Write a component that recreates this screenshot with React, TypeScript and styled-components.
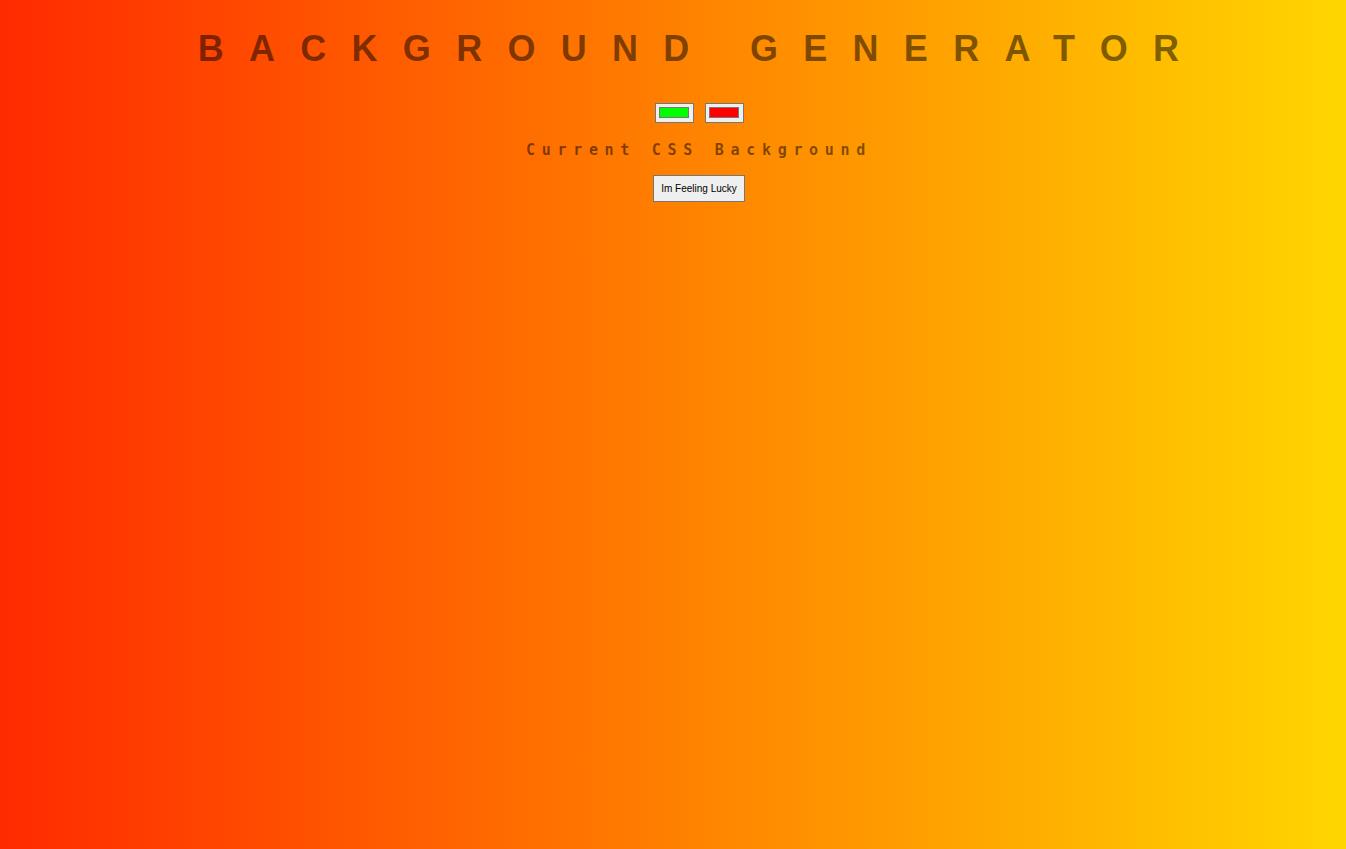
import React, { useState } from "react";
import styled, { createGlobalStyle } from "styled-components";

const Global = createGlobalStyle`
  html, body {
    margin: 0;
    padding: 0;
    min-height: 100%;
  }
  body {
    min-height: 849px;
    background: linear-gradient(to right, #ff2a00, #ffd600);
    font-family: "Liberation Sans", Arial, sans-serif;
    color: rgba(0, 0, 0, 0.5);
  }
`;

const Page = styled.main`
  display: flex;
  flex-direction: column;
  align-items: center;
  padding: 28px 0 0 52px;
  min-height: 849px;
  box-sizing: border-box;
`;

const Title = styled.h1`
  margin: 0;
  padding-left: 4px;
  font-family: "Liberation Sans", Arial, sans-serif;
  font-weight: 700;
  font-size: 36px;
  line-height: 42px;
  letter-spacing: 25.3px;
  text-transform: uppercase;
  white-space: nowrap;
`;

const Pickers = styled.div`
  display: flex;
  gap: 11px;
  margin-top: 33px;
`;

const ColorInput = styled.input`
  -webkit-appearance: none;
  appearance: none;
  box-sizing: border-box;
  width: 39px;
  height: 20px;
  margin: 0;
  padding: 0;
  border: 1px solid #767676;
  background: #efefef;
  cursor: pointer;

  &::-webkit-color-swatch-wrapper {
    padding: 3px 4px 4px 3px;
  }
  &::-webkit-color-swatch {
    border: 1px solid #777777;
    border-radius: 0;
  }
`;

const Caption = styled.h3`
  margin: 18px 0 0;
  font-family: "DejaVu Sans Mono", "Liberation Mono", monospace;
  font-weight: 700;
  font-size: 15px;
  line-height: 18px;
  letter-spacing: 6.7px;
  white-space: nowrap;
`;

const LuckyButton = styled.button`
  margin-top: 16px;
  box-sizing: border-box;
  height: 27px;
  padding: 0 7px;
  border: 1px solid #767676;
  border-radius: 0;
  background: #efefef;
  color: #000;
  font-family: "Liberation Sans", Arial, sans-serif;
  font-size: 10px;
  line-height: 12px;
  cursor: pointer;
`;

export default function App() {
  const [c1, setC1] = useState("#00ff00");
  const [c2, setC2] = useState("#ff0000");
  return (
    <>
      <Global />
      <Page>
        <Title>Background Generator</Title>
        <Pickers>
          <ColorInput type="color" value={c1} onChange={(e) => setC1(e.target.value)} />
          <ColorInput type="color" value={c2} onChange={(e) => setC2(e.target.value)} />
        </Pickers>
        <Caption>Current CSS Background</Caption>
        <LuckyButton type="button">Im Feeling Lucky</LuckyButton>
      </Page>
    </>
  );
}
